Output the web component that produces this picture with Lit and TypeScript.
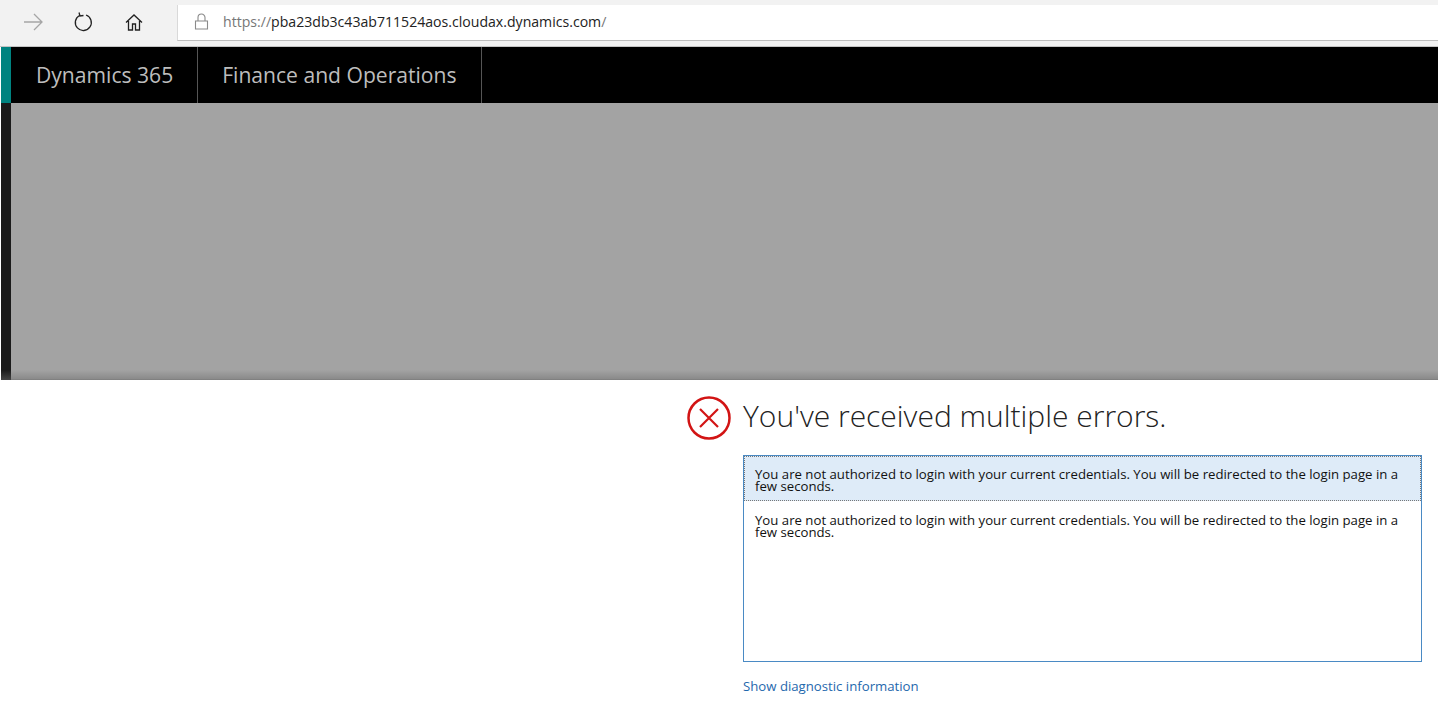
import { LitElement, html, css } from "lit";
import { customElement } from "lit/decorators.js";

const MESSAGE = "You are not authorized to login with your current credentials. You will be redirected to the login page in a few seconds.";

@customElement("app-root")
export class AppRoot extends LitElement {
  static styles = css`
    :host { display: block; width: 1438px; height: 707px; overflow: hidden; background: #fff; font-family: "Open Sans", "Noto Sans", sans-serif; }
    .chrome { height: 47px; padding-top: 5px; box-sizing: border-box; display: flex; background: #f2f2f2; border-bottom: 1px solid #c4c4c4; }
    .nav { width: 177px; flex: none; display: flex; align-items: flex-start; box-sizing: border-box; padding: 7px 0 0 23px; gap: 30px; }
    .nav svg { display: block; width: 20px; height: 20px; flex: none; fill: none; stroke-width: 1.3; }
    .nav .home { margin-left: 1px; }
    .back { stroke: #a6a6a6; }
    .dark { stroke: #222; }
    .address { flex: 1; height: 36px; background: #fff; border-left: 1px solid #d9d9d9; border-bottom: 1px solid #bdbdbd; display: flex; align-items: flex-start; padding: 8px 0 0 16px; box-sizing: border-box; }
    .lock { width: 15px; height: 17px; fill: none; stroke: #8a8a8a; stroke-width: 1.1; margin-right: 14px; }
    .url { font-size: 14.1px; line-height: 17px; color: #222; }
    .url span { color: #777; }
    .bar { height: 56px; background: #000; display: flex; border-left: 1px solid #fff; }
    .accent { width: 10px; background: #008380; flex: none; }
    .brand { display: flex; align-items: center; font-size: 21.100px; color: #bdbdbd; border-right: 1px solid #555; height: 100%; box-sizing: border-box; padding: 0 24px 2px 25px; }
    .brand + .brand { padding-left: 24px; }
    .shade { height: 277px; display: flex; border-left: 1px solid #fff; background: linear-gradient(to bottom, #a3a3a3 0, #a3a3a3 267px, #8a8a8a 276px, #777 277px); }
    .edge { width: 10px; background: linear-gradient(to bottom, #1a1a1a 0, #1a1a1a 267px, #444 277px); }
    .panel { margin-left: 687px; width: 735px; }
    .head { display: flex; align-items: center; gap: 12px; height: 75px; }
    .head svg { width: 44px; height: 44px; flex: none; fill: none; stroke: #d21414; }
    h1 { margin: -4px 0 0; font-size: 30px; font-weight: 300; color: #222; }
    .list { margin-left: 56px; height: 207px; box-sizing: border-box; border: 1px solid #4a8ac4; }
    .msg { font-size: 13.200px; line-height: 11.500px; color: #111; padding: 14px 10px 7px 11px; height: 46px; box-sizing: border-box; }
    .sel { height: 45px; padding-top: 13px; background: #deebf8; outline: 1px dotted #777; outline-offset: -1px; }
    a { display: block; margin: 15px 0 0 56px; font-size: 13.200px; line-height: 18px; color: #1f68ad; }
  `;

  render() {
    return html`
      <div class="chrome">
        <div class="nav">
          <svg class="back" viewBox="0 0 20 20"><path d="M1 10h18M11 2l8 8-8 8"/></svg>
          <svg class="dark" viewBox="0 0 20 20"><path d="M6.500 3.500A8 8 0 1 0 13 3M6 0.500l1 3.500 3.500-.5"/></svg>
          <svg class="dark home" viewBox="0 0 20 20"><path d="M2 10.500 10 3l8 7.500M4.500 9v9h4v-6h3v6h4V9"/></svg>
        </div>
        <div class="address">
          <svg class="lock" viewBox="0 0 15 17"><path d="M1.500 8h12v8h-12zM4 8V4.500a3.500 3.500 0 0 1 7 0V8"/></svg>
          <div class="url"><span>https://</span>pba23db3c43ab711524aos.cloudax.dynamics.com<span>/</span></div>
        </div>
      </div>
      <div class="bar">
        <div class="accent"></div>
        <div class="brand">Dynamics 365</div>
        <div class="brand">Finance and Operations</div>
      </div>
      <div class="shade"><div class="edge"></div></div>
      <div class="panel">
        <div class="head">
          <svg viewBox="0 0 44 44"><circle cx="22" cy="22" r="20.500" stroke-width="2.500"/><path d="M13 13l18 18M31 13 13 31" stroke-width="2.200"/></svg>
          <h1>You've received multiple errors.</h1>
        </div>
        <div class="list">
          <div class="msg sel">${MESSAGE}</div>
          <div class="msg">${MESSAGE}</div>
        </div>
        <a>Show diagnostic information</a>
      </div>
    `;
  }
}
